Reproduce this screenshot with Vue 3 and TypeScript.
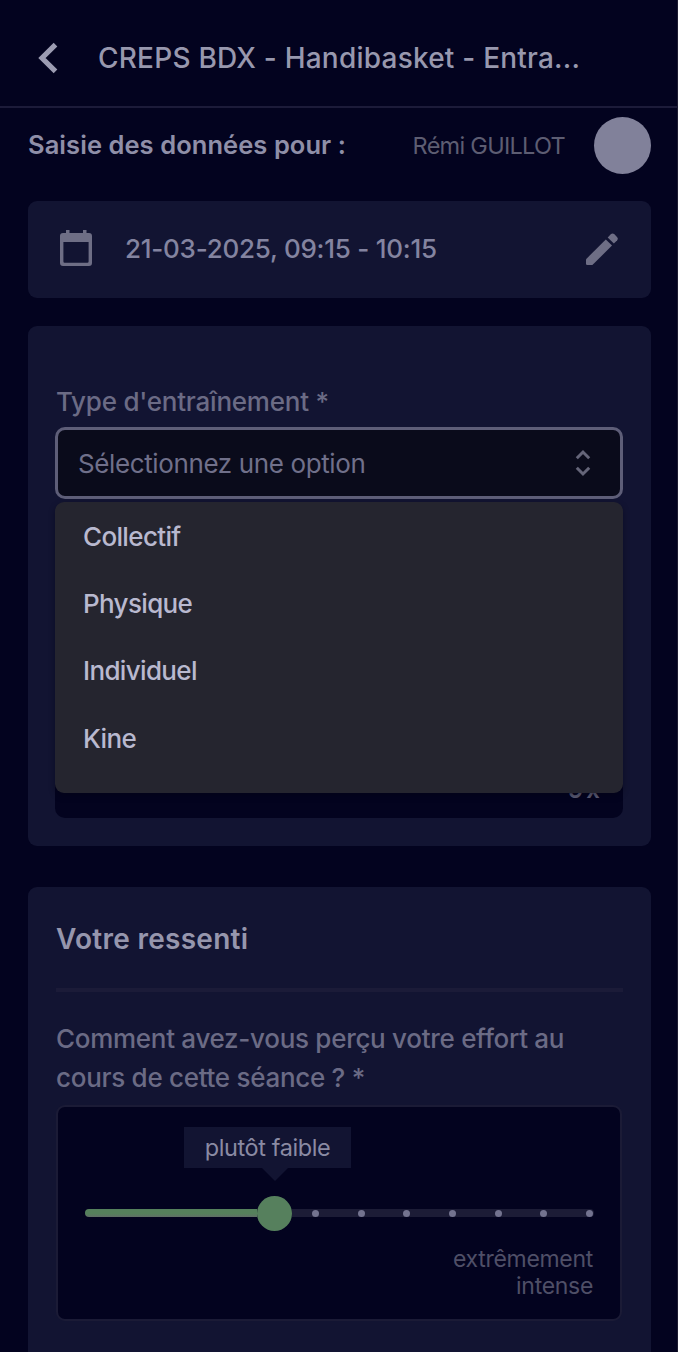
<script setup lang="ts">
const options: string[] = ['Collectif', 'Physique', 'Individuel', 'Kine']
const ticks: number[] = [1, 2, 3, 4, 5, 6, 7]
</script>

<template>
  <div class="screen">
    <header class="topbar">
      <svg class="back" width="21" height="32" viewBox="0 0 21 32" fill="none">
        <path d="M18.5 2.6 L5 16 L18.5 29.4" stroke="#9c9cb2" stroke-width="5.2" />
      </svg>
      <h1 class="title">CREPS BDX - Handibasket - Entra...</h1>
    </header>

    <div class="person">
      <span class="person-label">Saisie des données pour :</span>
      <span class="person-name">Rémi GUILLOT</span>
      <span class="avatar"></span>
    </div>

    <section class="card date-card">
      <svg class="calendar" width="34" height="38" viewBox="0 0 34 38">
        <path
          fill="#6e6e85"
          fill-rule="evenodd"
          d="M7 1h3.5v3H24V1h3.5v3H30q3 0 3 3v27q0 3-3 3H4q-3 0-3-3V7q0-3 3-3h3zM4.4 13v19.5q0 1.2 1.2 1.2h22.8q1.2 0 1.2-1.2V13z"
        />
      </svg>
      <span class="date">21-03-2025, 09:15 - 10:15</span>
      <svg class="pencil" width="34" height="34" viewBox="0 0 34 34" fill="#6e6e85">
        <path d="M1 27.2 L20.8 7.4 L27 13.6 L7.4 33 H2.2 Q1 33 1 31.8 Z" />
        <path d="M22.7 5.5 L26 2.1 Q27.6 .7 29.2 2.1 L32.2 5.2 Q33.6 6.7 32.2 8.2 L28.9 11.6 Z" />
      </svg>
    </section>

    <section class="card training-card">
      <label class="field-label type-label">Type d'entraînement *</label>
      <div class="select">
        <span class="placeholder">Sélectionnez une option</span>
        <svg width="16" height="28" viewBox="0 0 16 28" fill="none" stroke="#656579" stroke-width="3">
          <path d="M1.8 9.2 L8 3 L14.2 9.2" />
          <path d="M1.8 18.8 L8 25 L14.2 18.8" />
        </svg>
        <ul class="menu">
          <li v-for="option in options" :key="option">{{ option }}</li>
        </ul>
      </div>
      <div class="covered-field">9 x</div>
    </section>

    <section class="card feeling-card">
      <h2>Votre ressenti</h2>
      <hr />
      <p class="field-label question">
        Comment avez-vous perçu votre effort au<br />
        cours de cette séance ? *
      </p>
      <div class="effort">
        <div class="tooltip">plutôt faible</div>
        <div class="slider">
          <div class="filled"></div>
          <div class="thumb"></div>
          <div class="rail">
            <i v-for="tick in ticks" :key="tick"></i>
          </div>
        </div>
        <div class="end-label">
          extrêmement<br />
          intense
        </div>
      </div>
    </section>
  </div>
</template>

<style>
html,
body {
  background: #03031f;
}
</style>

<style scoped>
.screen {
  box-sizing: border-box;
  width: 678px;
  height: 1352px;
  overflow: hidden;
  background: #03031f;
  border-right: 1px solid #1c1b30;
  font-family: Inter, "Liberation Sans", sans-serif;
  display: flex;
  flex-direction: column;
}
.topbar {
  box-sizing: border-box;
  height: 108px;
  flex: none;
  border-bottom: 2px solid #1c1b39;
  padding: 10px 28px 0 37px;
  display: flex;
  align-items: center;
}
.title {
  margin: 0 0 0 40px;
  font-size: 28px;
  font-weight: 500;
  letter-spacing: 0.22px;
  color: #9898ae;
  white-space: nowrap;
}
.person {
  height: 93px;
  flex: none;
  box-sizing: border-box;
  padding: 0 26px 18px 28px;
  display: flex;
  align-items: center;
  white-space: nowrap;
}
.person-label {
  margin-bottom: 2px;
  font-size: 25.5px;
  font-weight: 600;
  letter-spacing: 0.06px;
  color: #8f8fa8;
}
.person-name {
  margin-left: auto;
  font-size: 23.5px;
  letter-spacing: -0.72px;
  color: #5d5d72;
}
.avatar {
  width: 57px;
  height: 57px;
  border-radius: 50%;
  background: #81819a;
  margin-left: 29px;
}
.card {
  flex: none;
  box-sizing: border-box;
  margin: 0 26px 0 28px;
  background: #121432;
  border-radius: 9px;
}
.date-card {
  height: 97px;
  padding: 0 32px 0 31px;
  display: flex;
  align-items: center;
}
.calendar {
  margin-bottom: 3px;
}
.date {
  margin-left: 32px;
  margin-bottom: 2px;
  font-size: 26px;
  font-weight: 500;
  letter-spacing: -0.25px;
  color: #8484a0;
  white-space: nowrap;
}
.pencil {
  margin-left: auto;
  margin-bottom: 1px;
}
.training-card {
  margin-top: 28px;
  height: 520px;
  padding: 58px 28px 0 27px;
}
.field-label {
  font-size: 26px;
  font-weight: 500;
  letter-spacing: -0.29px;
  color: #6b6b85;
  white-space: nowrap;
}
.type-label {
  display: block;
  height: 43px;
  line-height: 36px;
  padding-left: 1px;
  letter-spacing: -0.23px;
}
.select {
  position: relative;
  box-sizing: border-box;
  height: 72px;
  border: 3px solid #5e5e78;
  border-radius: 10px;
  background: #0a0b1b;
  padding: 0 29px 0 20px;
  display: flex;
  align-items: center;
  justify-content: space-between;
}
.placeholder {
  font-size: 26px;
  letter-spacing: -0.38px;
  color: #70708a;
  white-space: nowrap;
}
.menu {
  position: absolute;
  z-index: 1;
  top: 72px;
  left: -3px;
  right: -3px;
  height: 291px;
  box-sizing: border-box;
  margin: 0;
  padding: 1px 28px;
  list-style: none;
  background: #25252f;
  border-radius: 9px;
  box-shadow: 0 3px 6px #00001266;
}
.menu li {
  height: 67.2px;
  line-height: 67.2px;
  font-size: 26px;
  font-weight: 500;
  letter-spacing: -0.65px;
  color: #b9b9cf;
}
.covered-field {
  box-sizing: border-box;
  margin-top: 247px;
  height: 72px;
  border-radius: 10px;
  background: #03031f;
  padding: 23px 23px 0;
  text-align: right;
  font-size: 24px;
  font-weight: 600;
  line-height: 42px;
  color: #62627a;
  word-spacing: -3px;
}
.feeling-card {
  margin-top: 41px;
  height: 500px;
  padding: 34px 28px 0;
}
h2 {
  margin: 0;
  font-size: 28px;
  line-height: 36px;
  font-weight: 600;
  letter-spacing: 0.27px;
  color: #9696ad;
}
hr {
  margin: 31px 0 0;
  border: 0;
  height: 4px;
  background: #1b1b38;
}
.question {
  margin: 27px 0 0;
  line-height: 39px;
}
.effort {
  box-sizing: border-box;
  margin-top: 8px;
  height: 216px;
  border: 2px solid #1b1b36;
  border-radius: 9px;
  background: #03031f;
  margin-right: 1px;
  padding: 20px 27px 0;
}
.tooltip {
  position: relative;
  width: 167px;
  height: 41px;
  margin-left: 99px;
  background: #121432;
  text-align: center;
  line-height: 41px;
  font-size: 23.5px;
  letter-spacing: -0.4px;
  color: #8a8aa3;
  white-space: nowrap;
}
.tooltip::after {
  content: "";
  position: absolute;
  top: 41px;
  left: 78px;
  border: 13px solid transparent;
  border-top-color: #121432;
  border-bottom: 0;
}
.slider {
  margin-top: 27px;
  height: 36px;
  display: flex;
  align-items: center;
}
.filled {
  width: 172px;
  height: 8px;
  border-radius: 4px 0 0 4px;
  background: linear-gradient(#55805c 60%, #606f67);
}
.thumb {
  width: 35px;
  height: 35px;
  border-radius: 50%;
  background: #56805d;
}
.rail {
  flex: 1;
  height: 8px;
  margin-right: -1px;
  box-sizing: border-box;
  border-radius: 0 4px 4px 0;
  padding: 0 1px 0 20px;
  background: #1c1c36;
  display: flex;
  align-items: center;
  justify-content: space-between;
}
.rail i {
  width: 7px;
  height: 7px;
  border-radius: 50%;
  background: #73738f;
}
.end-label {
  margin-top: 15px;
  text-align: right;
  font-size: 23px;
  letter-spacing: -0.3px;
  line-height: 27px;
  color: #4f4f67;
}
</style>
